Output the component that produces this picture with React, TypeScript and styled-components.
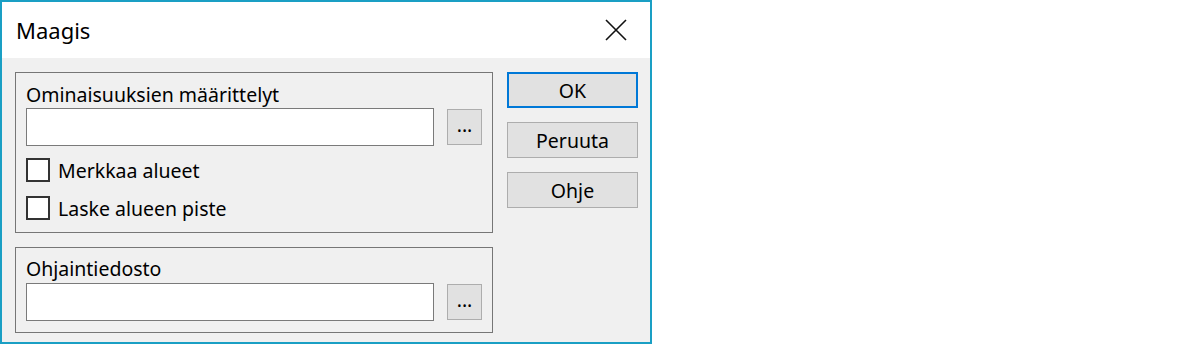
import styled, { createGlobalStyle } from "styled-components";

const GlobalStyle = createGlobalStyle`
  body {
    margin: 0;
    background: #ffffff;
    font-family: "Noto Sans", "Open Sans", sans-serif;
  }
`;

const Window = styled.div`
  width: 652px;
  height: 344px;
  box-sizing: border-box;
  border: 2px solid #1a9fc4;
  background: #f0f0f0;
  display: flex;
  flex-direction: column;
`;

const TitleBar = styled.div`
  height: 56px;
  background: #ffffff;
  display: flex;
  align-items: center;
  justify-content: space-between;
`;

const Title = styled.div`
  padding-left: 14px;
  font-size: 22px;
  color: #000;
`;

const CloseButton = styled.div`
  width: 69px;
  height: 56px;
  display: flex;
  align-items: center;
  justify-content: center;
`;

const Body = styled.div`
  flex: 1;
  display: flex;
  gap: 14px;
  padding: 14px 12px 10px 13px;
`;

const LeftColumn = styled.div`
  width: 478px;
  display: flex;
  flex-direction: column;
  gap: 14px;
`;

const RightColumn = styled.div`
  width: 131px;
  display: flex;
  flex-direction: column;
  gap: 14px;
`;

const GroupBox = styled.div<{ $top: number; $bottom: number }>`
  box-sizing: border-box;
  border: 1px solid #767676;
  padding: ${(p) => p.$top}px 10px ${(p) => p.$bottom}px 10px;
  display: flex;
  flex-direction: column;
`;

const Label = styled.div`
  font-size: 19.5px;
  line-height: 24px;
  height: 24px;
  color: #000;
  white-space: nowrap;
`;

const FieldRow = styled.div<{ $gap: number }>`
  margin-top: ${(p) => p.$gap}px;
  display: flex;
  align-items: center;
  gap: 13px;
`;

const TextField = styled.div`
  width: 408px;
  height: 38px;
  box-sizing: border-box;
  border: 1px solid #7a7a7a;
  background: #ffffff;
`;

const BrowseButton = styled.div`
  width: 35px;
  height: 36px;
  box-sizing: border-box;
  border: 1px solid #adadad;
  background: #e1e1e1;
  display: flex;
  align-items: center;
  justify-content: center;
  font-size: 19.5px;
  line-height: 24px;
  padding-bottom: 4px;
  color: #000;
`;

const CheckRows = styled.div`
  margin-top: 5px;
  display: flex;
  flex-direction: column;
`;

const CheckRow = styled.div`
  height: 38px;
  display: flex;
  align-items: center;
  gap: 8px;
  font-size: 19.5px;
  color: #000;
`;

const CheckBox = styled.div`
  width: 24px;
  height: 24px;
  box-sizing: border-box;
  border: 2px solid #333333;
  background: #ffffff;
`;

const DialogButton = styled.div<{ $default?: boolean }>`
  height: 36px;
  box-sizing: border-box;
  border: ${(p) => (p.$default ? "2px solid #0078d7" : "1px solid #adadad")};
  background: #e1e1e1;
  display: flex;
  align-items: center;
  justify-content: center;
  font-size: 19.5px;
  color: #000;
`;

export default function App() {
  return (
    <>
      <GlobalStyle />
      <Window>
        <TitleBar>
          <Title>Maagis</Title>
          <CloseButton>
            <svg width="22" height="22" viewBox="0 0 22 22">
              <path d="M1 1 L21 21 M21 1 L1 21" stroke="#111" strokeWidth="1.6" fill="none" />
            </svg>
          </CloseButton>
        </TitleBar>
        <Body>
          <LeftColumn>
            <GroupBox $top={10} $bottom={5}>
              <Label>Ominaisuuksien määrittelyt</Label>
              <FieldRow $gap={1}>
                <TextField />
                <BrowseButton>...</BrowseButton>
              </FieldRow>
              <CheckRows>
                <CheckRow>
                  <CheckBox />
                  Merkkaa alueet
                </CheckRow>
                <CheckRow>
                  <CheckBox />
                  Laske alueen piste
                </CheckRow>
              </CheckRows>
            </GroupBox>
            <GroupBox $top={9} $bottom={11}>
              <Label>Ohjaintiedosto</Label>
              <FieldRow $gap={2}>
                <TextField />
                <BrowseButton>...</BrowseButton>
              </FieldRow>
            </GroupBox>
          </LeftColumn>
          <RightColumn>
            <DialogButton $default>OK</DialogButton>
            <DialogButton>Peruuta</DialogButton>
            <DialogButton>Ohje</DialogButton>
          </RightColumn>
        </Body>
      </Window>
    </>
  );
}
